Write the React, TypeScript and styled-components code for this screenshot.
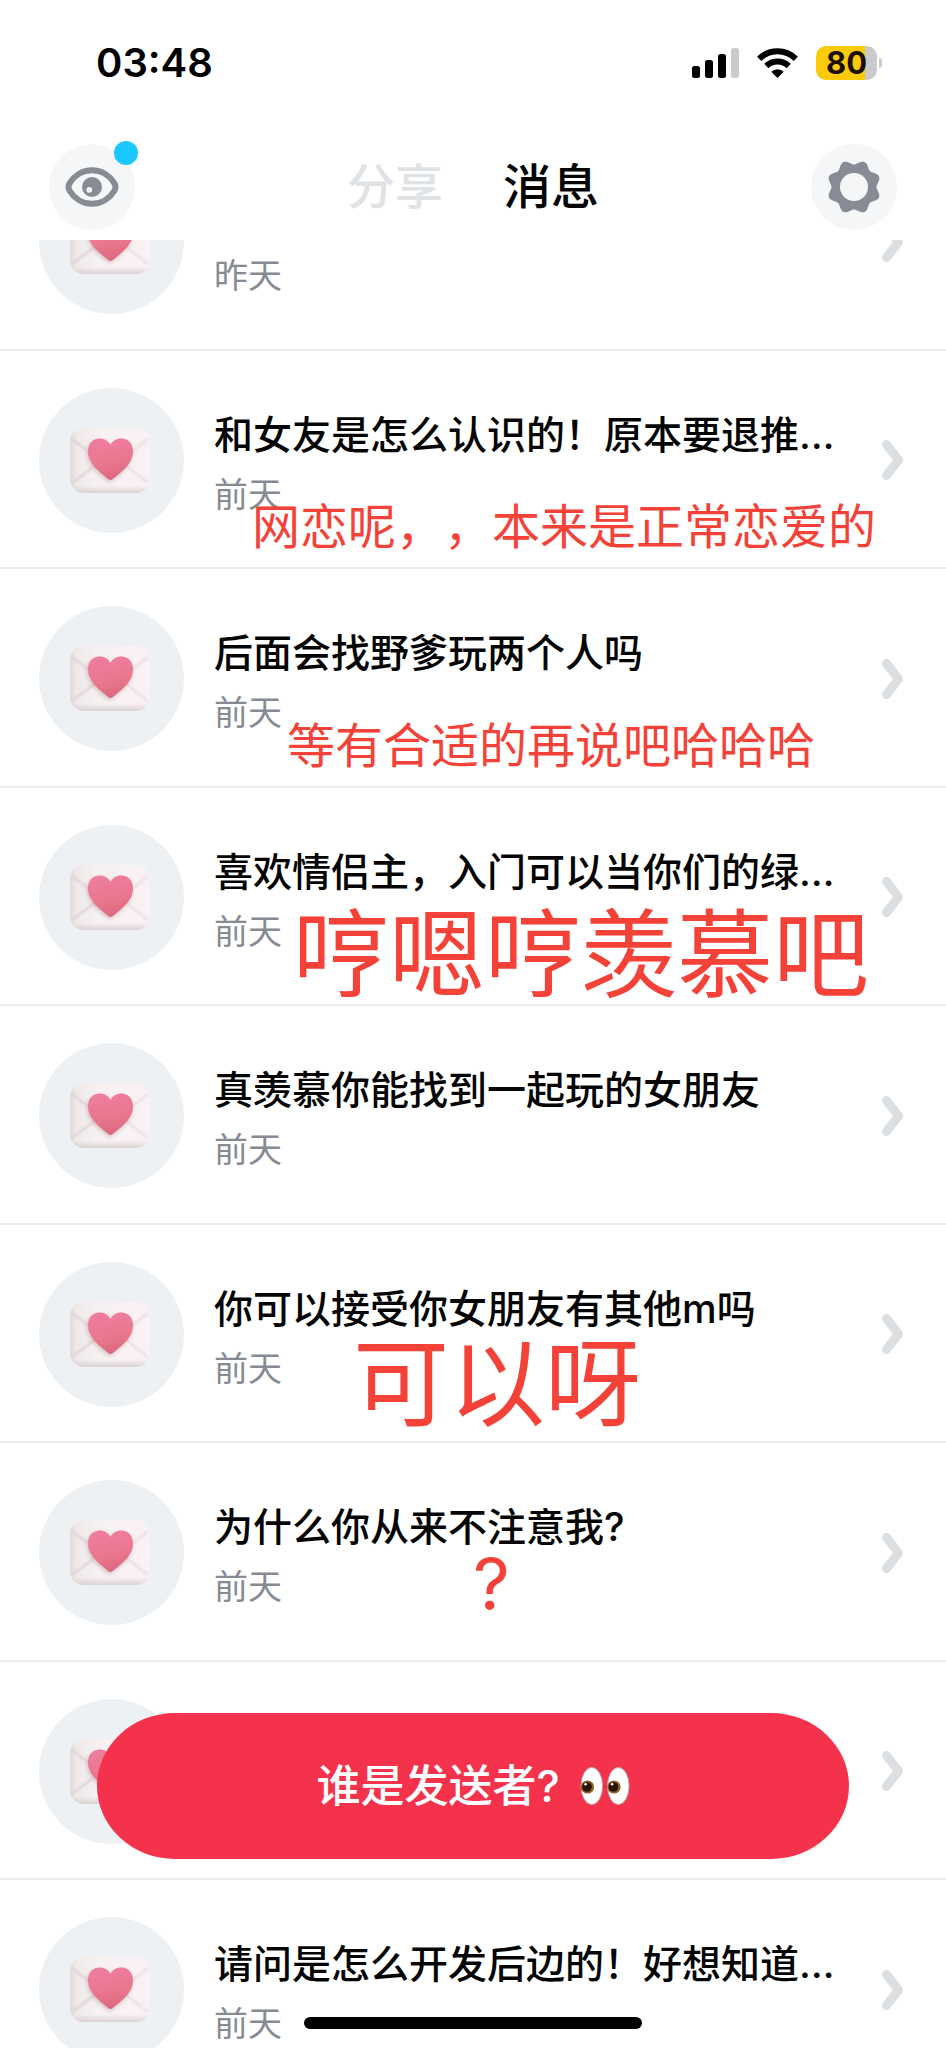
import React from "react";
import styled, { createGlobalStyle } from "styled-components";

const GlobalStyle = createGlobalStyle`
  *, *::before, *::after { box-sizing: border-box; }
  body {
    margin: 0;
    background: #fff;
    color: #050505;
    font-family: Inter, "Noto Sans CJK SC", sans-serif;
    text-spacing-trim: space-all;
  }
`;

const Screen = styled.div`
  position: relative;
  display: flex;
  flex-direction: column;
  height: 100vh;
  overflow: hidden;
  background: #fff;
`;

const StatusBar = styled.div`
  display: flex;
  flex: none;
  align-items: center;
  justify-content: space-between;
  height: 126px;
  padding: 0 64px 0 96px;
`;

const Clock = styled.time`
  font-size: 40px;
  font-weight: 600;
  line-height: 48px;
  color: #000;
`;

const StatusIcons = styled.div`
  display: flex;
  align-items: center;
  gap: 18px;
`;

const Battery = styled.div`
  display: flex;
  align-items: center;
  gap: 2px;
`;

const BatteryBody = styled.div`
  width: 61px;
  height: 34px;
  border-radius: 10px;
  background: linear-gradient(to right, #fbcb0a 80%, #cbcbcd 80%);
  font-size: 31px;
  font-weight: 700;
  line-height: 34px;
  text-align: center;
  color: #1a0f00;
`;

const BatteryTip = styled.div`
  width: 3px;
  height: 10px;
  border-radius: 0 3px 3px 0;
  background: #cbcbcd;
`;

const NavBar = styled.header`
  display: flex;
  flex: none;
  align-items: center;
  justify-content: space-between;
  height: 114px;
  padding: 8px 49px 0;
`;

const RoundButton = styled.button`
  position: relative;
  display: flex;
  align-items: center;
  justify-content: center;
  width: 86px;
  height: 86px;
  padding: 0;
  border: 0;
  border-radius: 50%;
  background: #f4f6f8;
`;

const UnreadDot = styled.span`
  position: absolute;
  top: -3px;
  right: -3px;
  width: 24px;
  height: 24px;
  border-radius: 50%;
  background: #1ac8ff;
`;

const Tabs = styled.nav`
  display: flex;
  gap: 60px;
`;

const Tab = styled.a<{ $active?: boolean }>`
  font-size: 48px;
  font-weight: 500;
  line-height: 60px;
  text-decoration: none;
  color: ${(p) => (p.$active ? "#050505" : "#e0e3e6")};
`;

const Viewport = styled.main`
  flex: 1;
  min-height: 0;
  overflow: hidden;
`;

/* The list is shown scrolled, with its first row half under the nav bar. */
const List = styled.ul`
  margin: -108px 0 0;
  padding: 0;
  list-style: none;
`;

const Item = styled.li`
  position: relative;
  height: 218px;
  border-bottom: 2px solid #ededee;
  &:nth-child(odd) {
    height: 219px;
  }
`;

const ItemLink = styled.a`
  display: flex;
  align-items: center;
  gap: 30px;
  height: 100%;
  padding: 2px 43px 0 39px;
  color: inherit;
  text-decoration: none;
`;

const Avatar = styled.span`
  flex: none;
  width: 145px;
  height: 145px;
  border-radius: 50%;
  background: #edf1f4;
`;

const ItemText = styled.span`
  display: flex;
  flex: 1;
  flex-direction: column;
  gap: 16px;
  min-width: 0;
  padding-top: 5px;
`;

const Title = styled.span`
  height: 48px;
  overflow: hidden;
  font-size: 39px;
  font-weight: 500;
  line-height: 48px;
  white-space: nowrap;
`;

const When = styled.span`
  height: 40px;
  font-size: 34px;
  line-height: 40px;
  color: #868a92;
`;

const noteSizes = { small: 48, medium: 72, large: 96 };

/* Reply written on top of a row. */
const Note = styled.p<{ $size: keyof typeof noteSizes; $left: number; $bottom: number }>`
  position: absolute;
  left: ${(p) => p.$left}px;
  bottom: ${(p) => p.$bottom}px;
  margin: 0;
  font-size: ${(p) => noteSizes[p.$size]}px;
  line-height: 1;
  white-space: nowrap;
  color: #f44238;
`;

const RevealButton = styled.button`
  position: absolute;
  right: 97px;
  bottom: 189px;
  left: 97px;
  display: flex;
  align-items: center;
  justify-content: center;
  gap: 20px;
  height: 146px;
  padding: 0;
  border: 0;
  border-radius: 78px / 73px;
  background: #f5324b;
  font-family: inherit;
  font-size: 44px;
  font-weight: 500;
  line-height: 56px;
  color: #fff;
`;

const HomeIndicator = styled.div`
  position: absolute;
  bottom: 19px;
  left: 50%;
  width: 338px;
  height: 12px;
  margin-left: -169px;
  border-radius: 6px;
  background: #000;
`;

const SignalIcon = () => (
  <svg width="47" height="30" viewBox="0 0 47 30" aria-hidden="true">
    <rect x="0" y="18" width="8" height="12" rx="2.5" />
    <rect x="13" y="12" width="8" height="18" rx="2.5" />
    <rect x="26" y="6" width="8" height="24" rx="2.5" />
    <rect x="39" y="0" width="8" height="30" rx="2.5" fill="#cbcbcd" />
  </svg>
);

const WifiIcon = () => (
  <svg width="41" height="30" viewBox="0 0 41 30" aria-hidden="true">
    <g fill="none" stroke="#000" strokeWidth="6">
      <path d="M2.2 10.9A26 26 0 0 1 38.8 10.9" />
      <path d="M9.3 18A16 16 0 0 1 31.7 18" />
    </g>
    <path d="M20.5 30L14.3 23.8A8.8 8.8 0 0 1 26.7 23.8Z" />
  </svg>
);

const EyeIcon = () => (
  <svg width="54" height="40" viewBox="0 0 54 40" aria-hidden="true">
    <path
      d="M27 3.2C37 3.2 45 9 49.2 16Q51.8 20 49.2 24C45 31 37 36.8 27 36.8S9 31 4.8 24Q2.2 20 4.8 16C9 9 17 3.2 27 3.2Z"
      fill="none"
      stroke="#868b94"
      strokeWidth="6"
    />
    <circle cx="27" cy="20" r="10" fill="#868b94" />
    <circle cx="24.3" cy="22.8" r="2.9" fill="#f4f6f8" />
  </svg>
);

/* Eight soft teeth: a circle whose radius swings as the angle goes round. */
const gearOutline = Array.from({ length: 144 }, (_, i) => {
  const angle = (i / 144) * Math.PI * 2;
  const radius = 24.8 - 2.3 * Math.cos(angle * 8);
  return `${(28 + radius * Math.cos(angle)).toFixed(2)} ${(28 + radius * Math.sin(angle)).toFixed(2)}`;
}).join("L");

const GearIcon = () => (
  <svg width="56" height="56" viewBox="0 0 56 56" aria-hidden="true">
    <path d={`M${gearOutline}Z`} fill="#868b94" />
    <circle cx="28" cy="28" r="14" fill="#f4f6f8" />
  </svg>
);

const LetterDefs = () => (
  <svg width="0" height="0" style={{ position: "absolute" }} aria-hidden="true">
    <defs>
      <linearGradient id="paper" x1="0" y1="0" x2="1" y2="0">
        <stop offset="0" stopColor="#dfd9da" />
        <stop offset="0.08" stopColor="#efe9ea" />
        <stop offset="0.35" stopColor="#f7f1f2" />
        <stop offset="1" stopColor="#fbf1f4" />
      </linearGradient>
      <linearGradient id="paperEdge" x1="0" y1="0" x2="0" y2="1">
        <stop offset="0.88" stopColor="#d8cfd0" stopOpacity="0" />
        <stop offset="1" stopColor="#d3c9ca" stopOpacity="0.8" />
      </linearGradient>
      <linearGradient id="heart" x1="0.4" y1="0" x2="0.6" y2="1">
        <stop offset="0" stopColor="#ef7d9f" />
        <stop offset="0.6" stopColor="#ea768c" />
        <stop offset="1" stopColor="#d9667c" />
      </linearGradient>
      <filter id="soft" x="-30%" y="-30%" width="160%" height="160%">
        <feGaussianBlur stdDeviation="2" />
      </filter>
      <filter id="crease" x="-10%" y="-10%" width="120%" height="120%">
        <feGaussianBlur stdDeviation="0.9" />
      </filter>
      <path
        id="heartShape"
        d="M71.5 93C70.5 93 69.5 92.3 68 91C58 83 49 75.5 49 64.5C49 56.5 54 51.5 60.5 51.5C65.5 51.5 69.5 54 71.5 58C73.5 54 77.5 51.5 82.5 51.5C89 51.5 94 56.5 94 64.5C94 75.5 85 83 75 91C73.5 92.3 72.5 93 71.5 93Z"
      />
    </defs>
  </svg>
);

const LetterIcon = () => (
  <svg width="145" height="145" viewBox="0 1 145 145" display="block" aria-hidden="true">
    <rect x="31" y="41" width="80" height="65" rx="14" fill="url(#paper)" />
    <rect x="31" y="41" width="80" height="65" rx="14" fill="url(#paperEdge)" />
    <g fill="none" stroke="#d9cfd2" strokeWidth="2" filter="url(#crease)">
      <path d="M33 52L55 69" />
      <path d="M33 96L58 77" />
      <path d="M109 52L88 69" opacity="0.6" />
      <path d="M109 96L85 77" opacity="0.6" />
    </g>
    <use href="#heartShape" x="-1" y="2" fill="#b99aa2" opacity="0.55" filter="url(#soft)" />
    <use href="#heartShape" fill="url(#heart)" />
  </svg>
);

const ChevronIcon = () => (
  <svg width="21" height="40" viewBox="0 0 21 40" aria-hidden="true">
    <path
      d="M4.5 4.5L16.5 20L4.5 35.5"
      fill="none"
      stroke="#dcdfe2"
      strokeWidth="9"
      strokeLinecap="round"
      strokeLinejoin="round"
    />
  </svg>
);

const EyesIcon = () => (
  <svg width="50" height="40" viewBox="0 0 50 40" aria-hidden="true">
    {[0, 26.5].map((x) => (
      <g key={x} transform={`translate(${x} 0)`}>
        <ellipse cx="11.8" cy="20" rx="10.8" ry="18.6" fill="#fff" stroke="#b9a3a5" strokeWidth="1" />
        <circle cx="7.5" cy="21" r="6.6" fill="#8a6420" />
        <circle cx="7" cy="21" r="4.8" fill="#2a1206" />
        <circle cx="5.6" cy="18.3" r="1.3" fill="#fff" />
      </g>
    ))}
  </svg>
);

type Message = {
  title?: string;
  when?: string;
  note?: { text: string; size: keyof typeof noteSizes; left: number; bottom: number };
};

const messages: Message[] = [
  { when: "昨天" },
  {
    title: "和女友是怎么认识的！原本要退推…",
    when: "前天",
    note: { text: "网恋呢，，本来是正常恋爱的", size: "small", left: 252, bottom: 16 },
  },
  {
    title: "后面会找野爹玩两个人吗",
    when: "前天",
    note: { text: "等有合适的再说吧哈哈哈", size: "small", left: 287, bottom: 16 },
  },
  {
    title: "喜欢情侣主，入门可以当你们的绿…",
    when: "前天",
    note: { text: "哼嗯哼羡慕吧", size: "large", left: 293, bottom: 2 },
  },
  { title: "真羡慕你能找到一起玩的女朋友", when: "前天" },
  {
    title: "你可以接受你女朋友有其他m吗",
    when: "前天",
    note: { text: "可以呀", size: "large", left: 353, bottom: 10 },
  },
  {
    title: "为什么你从来不注意我?",
    when: "前天",
    note: { text: "?", size: "medium", left: 473, bottom: 40 },
  },
  {},
  { title: "请问是怎么开发后边的！好想知道…", when: "前天" },
];

const MessageRow = ({ title, when, note }: Message) => (
  <Item>
    <ItemLink href="#message">
      <Avatar>
        <LetterIcon />
      </Avatar>
      <ItemText>
        <Title>{title}</Title>
        <When>{when}</When>
      </ItemText>
      <ChevronIcon />
    </ItemLink>
    {note && (
      <Note $size={note.size} $left={note.left} $bottom={note.bottom}>
        {note.text}
      </Note>
    )}
  </Item>
);

export default function App() {
  return (
    <Screen>
      <GlobalStyle />
      <LetterDefs />
      <StatusBar>
        <Clock>03:48</Clock>
        <StatusIcons>
          <SignalIcon />
          <WifiIcon />
          <Battery>
            <BatteryBody>80</BatteryBody>
            <BatteryTip />
          </Battery>
        </StatusIcons>
      </StatusBar>
      <NavBar>
        <RoundButton type="button">
          <EyeIcon />
          <UnreadDot />
        </RoundButton>
        <Tabs>
          <Tab href="#share">分享</Tab>
          <Tab href="#messages" $active aria-current="page">
            消息
          </Tab>
        </Tabs>
        <RoundButton type="button">
          <GearIcon />
        </RoundButton>
      </NavBar>
      <Viewport>
        <List>
          {messages.map((message, i) => (
            <MessageRow key={i} {...message} />
          ))}
        </List>
      </Viewport>
      <RevealButton type="button">
        谁是发送者?
        <EyesIcon />
      </RevealButton>
      <HomeIndicator />
    </Screen>
  );
}
